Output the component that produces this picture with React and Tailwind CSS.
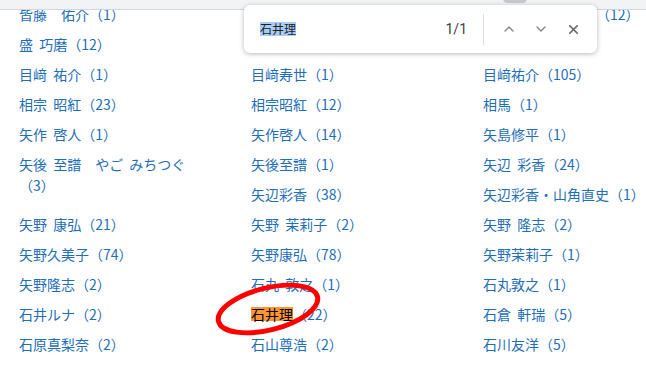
import { ChevronUp, ChevronDown, X } from 'lucide-react';

// hidden: the name lies under the find bar, so only a placeholder of its width is kept
const items = [
  { t: '皆藤　佑介', n: 1 },
  { t: '皆藤佑介', n: 3, hidden: true },
  { t: '皆藤佑介・盛巧磨', n: 12, nameHidden: true },
  { t: '盛 巧磨', n: 12 },
  { t: '盛巧磨', n: 4, hidden: true },
  { t: '盛巧磨', n: 2, hidden: true },
  { t: '目﨑 祐介', n: 1 },
  { t: '目﨑寿世', n: 1 },
  { t: '目﨑祐介', n: 105 },
  { t: '相宗 昭紅', n: 23 },
  { t: '相宗昭紅', n: 12 },
  { t: '相馬', n: 1 },
  { t: '矢作 啓人', n: 1 },
  { t: '矢作啓人', n: 14 },
  { t: '矢島修平', n: 1 },
  { t: '矢後 至譜　やご みちつぐ', n: 3, tall: true },
  { t: '矢後至譜', n: 1 },
  { t: '矢辺 彩香', n: 24 },
  { t: '矢辺彩香', n: 38 },
  { t: '矢辺彩香・山角直史', n: 1 },
  { t: '矢野 康弘', n: 21 },
  { t: '矢野 茉莉子', n: 2 },
  { t: '矢野 隆志', n: 2 },
  { t: '矢野久美子', n: 74 },
  { t: '矢野康弘', n: 78 },
  { t: '矢野茉莉子', n: 1 },
  { t: '矢野隆志', n: 2 },
  { t: '石丸 敦之', n: 1 },
  { t: '石丸敦之', n: 1 },
  { t: '石井ルナ', n: 2 },
  { t: '石井理', n: 22, hit: true },
  { t: '石倉 軒瑞', n: 5 },
  { t: '石原真梨奈', n: 2 },
  { t: '石山尊浩', n: 2 },
  { t: '石川友洋', n: 5 },
];

const Entry = ({ item }) => {
  if (item.hidden) return <div />;

  let name = item.t;
  if (item.hit) {
    name = <span className="inline-block bg-[#ff9632] text-black leading-[14px]">{item.t}</span>;
  } else if (item.nameHidden) {
    name = <span className="inline-block w-[113px]" />;
  }

  return (
    <div className={`pt-[4px] leading-[21px] ${item.tall ? 'row-span-2 w-[185px]' : ''}`}>
      <a className="text-[#1e6eb8] [word-spacing:3px]">
        {name}（{item.n}）
      </a>
    </div>
  );
};

const FindBar = () => (
  <div className="absolute left-[244px] top-[5px] w-[353px] h-[48px] rounded-[6px] bg-white shadow-[0_1px_5px_rgba(0,0,0,0.28)] flex items-center">
    <div className="flex-1 pl-4 text-[12px] text-[#202124]">
      <span className="inline-block bg-[#a8cdf7] leading-[14px]">石井理</span>
    </div>
    <div className="text-[14px] text-[#3c4043] font-['Roboto',sans-serif]">1/1</div>
    <div className="ml-4 mr-[9px] w-px h-[31px] bg-[#dadce0]" />
    <div className="w-8 flex justify-center text-[#80868b]">
      <ChevronUp size={16} strokeWidth={2} />
    </div>
    <div className="w-8 flex justify-center text-[#80868b]">
      <ChevronDown size={16} strokeWidth={2} />
    </div>
    <div className="w-8 mr-2 flex justify-center text-[#5f6368]">
      <X size={15} strokeWidth={2.6} />
    </div>
  </div>
);

export default function App() {
  return (
    <div className="relative w-[646px] h-[368px] overflow-hidden bg-white font-['Noto_Sans_CJK_JP',sans-serif] text-[14px]">
      <div className="grid grid-cols-[232px_232px_1fr] auto-rows-[30px] pl-[19px]">
        {items.map((item, i) => (
          <Entry key={i} item={item} />
        ))}
      </div>

      <div className="absolute top-0 left-0 right-0 h-[10px] bg-[#f1f3f4] border-b border-[#d3d5d8]" />
      <div className="absolute left-[503px] -top-[6px] w-[24px] h-[9px] rounded-full bg-[#c6c8cb]" />

      <FindBar />

      <svg className="absolute inset-0 pointer-events-none" width="646" height="368">
        <ellipse
          cx="268"
          cy="309"
          rx="51"
          ry="21"
          transform="rotate(-14 268 309)"
          fill="none"
          stroke="#f00"
          strokeWidth="5"
        />
      </svg>
    </div>
  );
}
